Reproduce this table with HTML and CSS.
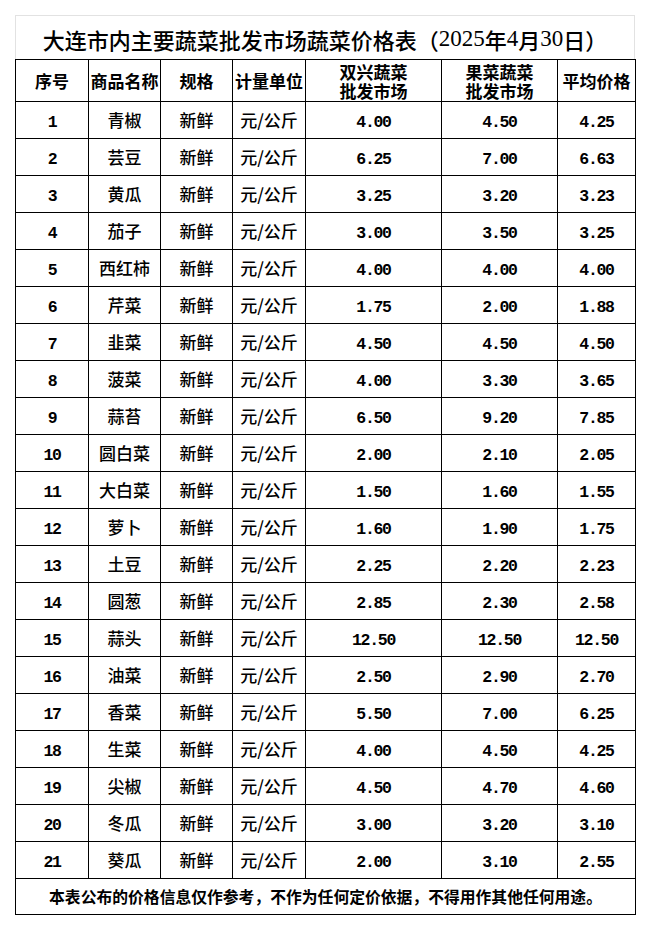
FILE: index.html
```html
<!DOCTYPE html>
<html lang="zh-CN">
<head>
<meta charset="utf-8">
<title>大连市内主要蔬菜批发市场蔬菜价格表</title>
<link rel="stylesheet" href="styles.css">
</head>
<body>
<div class="sheet">
  <div class="title">大连市内主要蔬菜批发市场蔬菜价格表（<span class="tnum">2025</span>年<span class="tnum">4</span>月<span class="tnum">30</span>日）</div>
  <table class="prices">
    <colgroup>
      <col class="c-no"><col class="c-name"><col class="c-spec"><col class="c-unit"><col class="c-m1"><col class="c-m2"><col class="c-avg">
    </colgroup>
    <thead>
      <tr>
        <th>序号</th><th>商品名称</th><th>规格</th><th>计量单位</th>
        <th class="two"><span class="ln">双兴蔬菜</span><span class="ln">批发市场</span></th>
        <th class="two"><span class="ln">果菜蔬菜</span><span class="ln">批发市场</span></th>
        <th>平均价格</th>
      </tr>
    </thead>
    <tbody>
      <tr><td class="num">1</td><td>青椒</td><td>新鲜</td><td>元/公斤</td><td class="num">4.00</td><td class="num">4.50</td><td class="num">4.25</td></tr>
      <tr><td class="num">2</td><td>芸豆</td><td>新鲜</td><td>元/公斤</td><td class="num">6.25</td><td class="num">7.00</td><td class="num">6.63</td></tr>
      <tr><td class="num">3</td><td>黄瓜</td><td>新鲜</td><td>元/公斤</td><td class="num">3.25</td><td class="num">3.20</td><td class="num">3.23</td></tr>
      <tr><td class="num">4</td><td>茄子</td><td>新鲜</td><td>元/公斤</td><td class="num">3.00</td><td class="num">3.50</td><td class="num">3.25</td></tr>
      <tr><td class="num">5</td><td>西红柿</td><td>新鲜</td><td>元/公斤</td><td class="num">4.00</td><td class="num">4.00</td><td class="num">4.00</td></tr>
      <tr><td class="num">6</td><td>芹菜</td><td>新鲜</td><td>元/公斤</td><td class="num">1.75</td><td class="num">2.00</td><td class="num">1.88</td></tr>
      <tr><td class="num">7</td><td>韭菜</td><td>新鲜</td><td>元/公斤</td><td class="num">4.50</td><td class="num">4.50</td><td class="num">4.50</td></tr>
      <tr><td class="num">8</td><td>菠菜</td><td>新鲜</td><td>元/公斤</td><td class="num">4.00</td><td class="num">3.30</td><td class="num">3.65</td></tr>
      <tr><td class="num">9</td><td>蒜苔</td><td>新鲜</td><td>元/公斤</td><td class="num">6.50</td><td class="num">9.20</td><td class="num">7.85</td></tr>
      <tr><td class="num">10</td><td>圆白菜</td><td>新鲜</td><td>元/公斤</td><td class="num">2.00</td><td class="num">2.10</td><td class="num">2.05</td></tr>
      <tr><td class="num">11</td><td>大白菜</td><td>新鲜</td><td>元/公斤</td><td class="num">1.50</td><td class="num">1.60</td><td class="num">1.55</td></tr>
      <tr><td class="num">12</td><td>萝卜</td><td>新鲜</td><td>元/公斤</td><td class="num">1.60</td><td class="num">1.90</td><td class="num">1.75</td></tr>
      <tr><td class="num">13</td><td>土豆</td><td>新鲜</td><td>元/公斤</td><td class="num">2.25</td><td class="num">2.20</td><td class="num">2.23</td></tr>
      <tr><td class="num">14</td><td>圆葱</td><td>新鲜</td><td>元/公斤</td><td class="num">2.85</td><td class="num">2.30</td><td class="num">2.58</td></tr>
      <tr><td class="num">15</td><td>蒜头</td><td>新鲜</td><td>元/公斤</td><td class="num">12.50</td><td class="num">12.50</td><td class="num">12.50</td></tr>
      <tr><td class="num">16</td><td>油菜</td><td>新鲜</td><td>元/公斤</td><td class="num">2.50</td><td class="num">2.90</td><td class="num">2.70</td></tr>
      <tr><td class="num">17</td><td>香菜</td><td>新鲜</td><td>元/公斤</td><td class="num">5.50</td><td class="num">7.00</td><td class="num">6.25</td></tr>
      <tr><td class="num">18</td><td>生菜</td><td>新鲜</td><td>元/公斤</td><td class="num">4.00</td><td class="num">4.50</td><td class="num">4.25</td></tr>
      <tr><td class="num">19</td><td>尖椒</td><td>新鲜</td><td>元/公斤</td><td class="num">4.50</td><td class="num">4.70</td><td class="num">4.60</td></tr>
      <tr><td class="num">20</td><td>冬瓜</td><td>新鲜</td><td>元/公斤</td><td class="num">3.00</td><td class="num">3.20</td><td class="num">3.10</td></tr>
      <tr><td class="num">21</td><td>葵瓜</td><td>新鲜</td><td>元/公斤</td><td class="num">2.00</td><td class="num">3.10</td><td class="num">2.55</td></tr>
    </tbody>
    <tfoot>
      <tr><td colspan="7" class="note">本表公布的价格信息仅作参考，不作为任何定价依据，不得用作其他任何用途。</td></tr>
    </tfoot>
  </table>
</div>
</body>
</html>
```
FILE: styles.css
```css
html, body {
  margin: 0;
  padding: 0;
  background: #ffffff;
}

body {
  font-family: "Noto Sans CJK SC", "Noto Sans", sans-serif;
  color: #000000;
}

.sheet {
  margin: 15px 0 0 15px;
  width: 620px;
}

.title {
  box-sizing: border-box;
  height: 44px;
  border: 1px solid #e2e2e2;
  border-bottom: none;
  display: flex;
  align-items: center;
  justify-content: center;
  font-size: 22px;
  font-weight: 500;
  white-space: nowrap;
  padding-top: 2px;
}

.title .tnum {
  font-family: "Liberation Serif", serif;
  font-size: 23px;
}

.prices {
  width: 620px;
  table-layout: fixed;
  border-collapse: collapse;
}

.c-no { width: 73px; }
.c-name { width: 72px; }
.c-spec { width: 72px; }
.c-unit { width: 73px; }
.c-m1 { width: 136px; }
.c-m2 { width: 116px; }
.c-avg { width: 78px; }

.prices th,
.prices td {
  border: 1px solid #000000;
  padding: 0;
  text-align: center;
  vertical-align: middle;
  font-size: 17px;
  font-weight: 500;
  white-space: nowrap;
}

.prices th {
  height: 41px;
  line-height: 20px;
  font-weight: 700;
}

.prices th .ln {
  display: block;
  height: 19px;
  line-height: 19px;
  overflow: visible;
}

.prices tbody td {
  height: 36px;
  line-height: 20px;
}

.prices td.num {
  font-family: "Liberation Mono", monospace;
  font-weight: 700;
  font-size: 16.5px;
  letter-spacing: -1.3px;
  padding-top: 5px;
  box-sizing: border-box;
}

.prices td.note {
  height: 35px;
  font-size: 15.8px;
  font-weight: 700;
}
```
